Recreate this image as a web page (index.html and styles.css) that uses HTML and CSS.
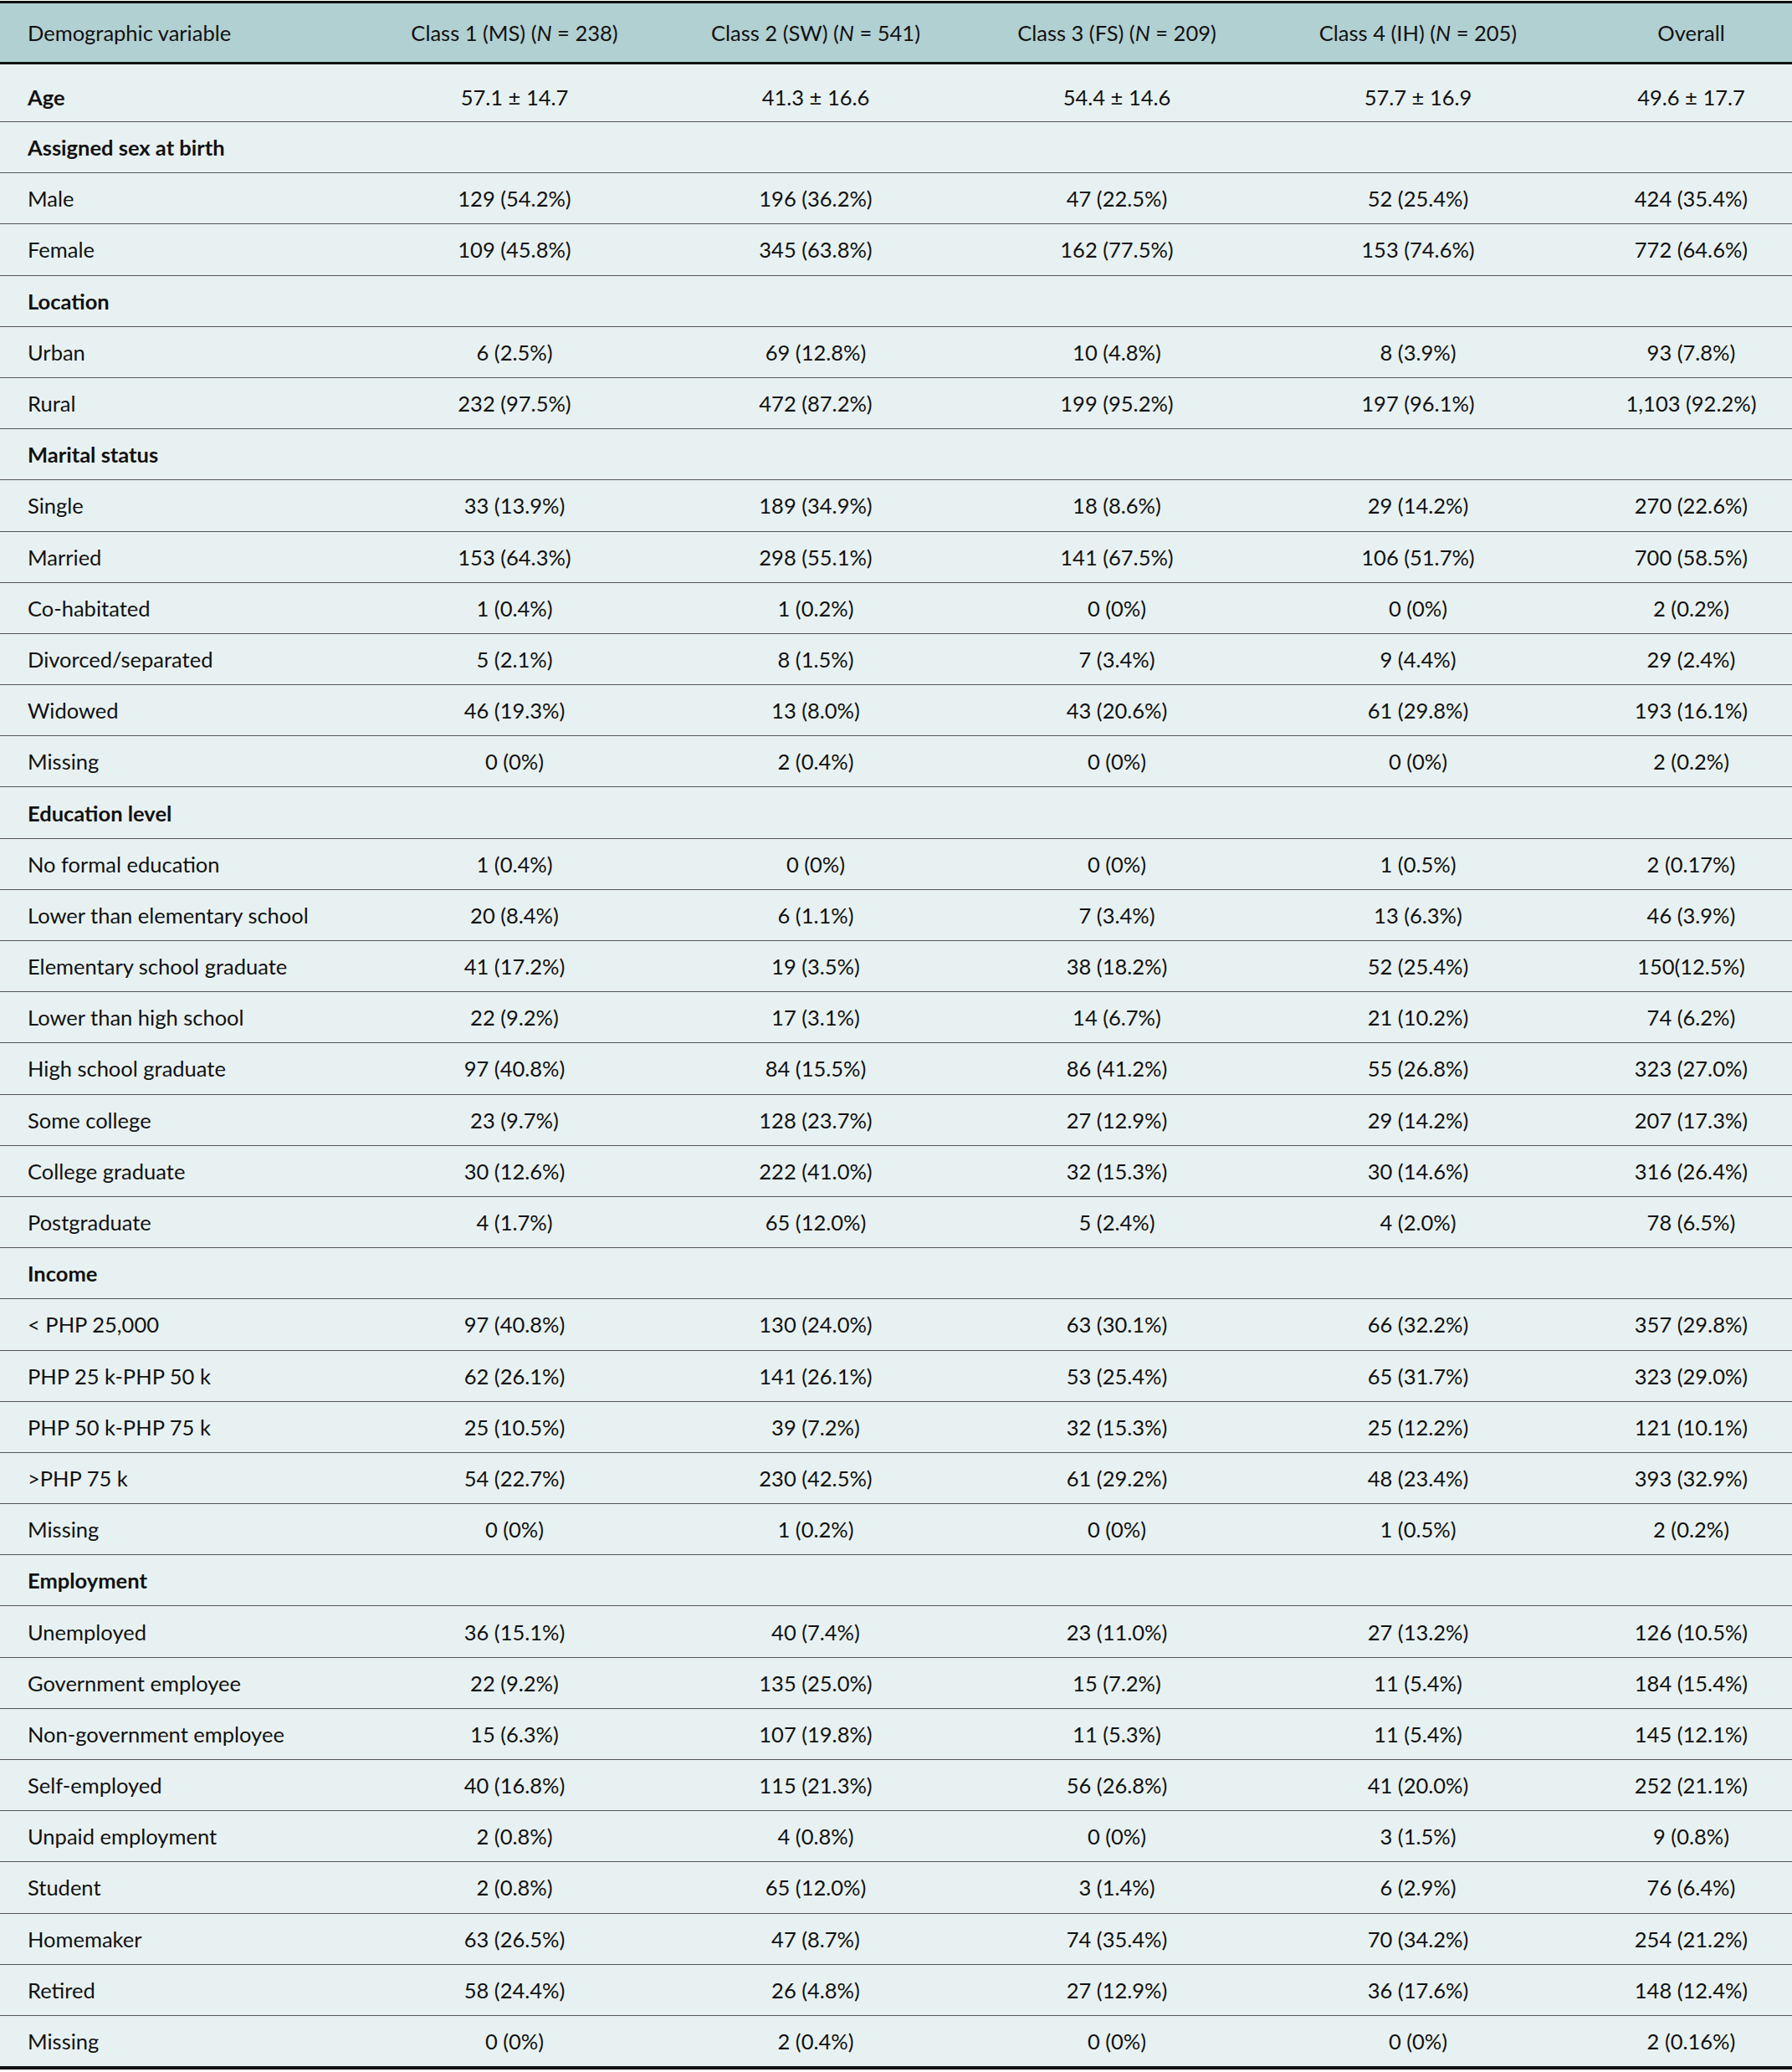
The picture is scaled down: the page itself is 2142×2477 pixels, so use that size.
FILE: index.html
```html
<!DOCTYPE html>
<html lang="en">
<head>
    <meta charset="UTF-8">
    <title>Demographic characteristics by class</title>
    <link rel="stylesheet" href="styles.css">
</head>
<body>
    <table class="demo-table">
        <colgroup>
            <col class="col-label">
            <col class="col-class">
            <col class="col-class">
            <col class="col-class">
            <col class="col-class">
            <col class="col-overall">
        </colgroup>
        <thead>
            <tr>
                <th>Demographic variable</th>
                <th>Class 1 (MS) (<i>N</i> = 238)</th>
                <th>Class 2 (SW) (<i>N</i> = 541)</th>
                <th>Class 3 (FS) (<i>N</i> = 209)</th>
                <th>Class 4 (IH) (<i>N</i> = 205)</th>
                <th class="overall">Overall</th>
            </tr>
        </thead>
        <tbody>
            <tr class="first-row"><td class="group">Age</td><td>57.1 ± 14.7</td><td>41.3 ± 16.6</td><td>54.4 ± 14.6</td><td>57.7 ± 16.9</td><td class="overall">49.6 ± 17.7</td></tr>
            <tr><td class="group">Assigned sex at birth</td><td></td><td></td><td></td><td></td><td class="overall"></td></tr>
            <tr><td>Male</td><td>129 (54.2%)</td><td>196 (36.2%)</td><td>47 (22.5%)</td><td>52 (25.4%)</td><td class="overall">424 (35.4%)</td></tr>
            <tr><td>Female</td><td>109 (45.8%)</td><td>345 (63.8%)</td><td>162 (77.5%)</td><td>153 (74.6%)</td><td class="overall">772 (64.6%)</td></tr>
            <tr><td class="group">Location</td><td></td><td></td><td></td><td></td><td class="overall"></td></tr>
            <tr><td>Urban</td><td>6 (2.5%)</td><td>69 (12.8%)</td><td>10 (4.8%)</td><td>8 (3.9%)</td><td class="overall">93 (7.8%)</td></tr>
            <tr><td>Rural</td><td>232 (97.5%)</td><td>472 (87.2%)</td><td>199 (95.2%)</td><td>197 (96.1%)</td><td class="overall">1,103 (92.2%)</td></tr>
            <tr><td class="group">Marital status</td><td></td><td></td><td></td><td></td><td class="overall"></td></tr>
            <tr><td>Single</td><td>33 (13.9%)</td><td>189 (34.9%)</td><td>18 (8.6%)</td><td>29 (14.2%)</td><td class="overall">270 (22.6%)</td></tr>
            <tr><td>Married</td><td>153 (64.3%)</td><td>298 (55.1%)</td><td>141 (67.5%)</td><td>106 (51.7%)</td><td class="overall">700 (58.5%)</td></tr>
            <tr><td>Co-habitated</td><td>1 (0.4%)</td><td>1 (0.2%)</td><td>0 (0%)</td><td>0 (0%)</td><td class="overall">2 (0.2%)</td></tr>
            <tr><td>Divorced/separated</td><td>5 (2.1%)</td><td>8 (1.5%)</td><td>7 (3.4%)</td><td>9 (4.4%)</td><td class="overall">29 (2.4%)</td></tr>
            <tr><td>Widowed</td><td>46 (19.3%)</td><td>13 (8.0%)</td><td>43 (20.6%)</td><td>61 (29.8%)</td><td class="overall">193 (16.1%)</td></tr>
            <tr><td>Missing</td><td>0 (0%)</td><td>2 (0.4%)</td><td>0 (0%)</td><td>0 (0%)</td><td class="overall">2 (0.2%)</td></tr>
            <tr><td class="group">Education level</td><td></td><td></td><td></td><td></td><td class="overall"></td></tr>
            <tr><td>No formal education</td><td>1 (0.4%)</td><td>0 (0%)</td><td>0 (0%)</td><td>1 (0.5%)</td><td class="overall">2 (0.17%)</td></tr>
            <tr><td>Lower than elementary school</td><td>20 (8.4%)</td><td>6 (1.1%)</td><td>7 (3.4%)</td><td>13 (6.3%)</td><td class="overall">46 (3.9%)</td></tr>
            <tr><td>Elementary school graduate</td><td>41 (17.2%)</td><td>19 (3.5%)</td><td>38 (18.2%)</td><td>52 (25.4%)</td><td class="overall">150(12.5%)</td></tr>
            <tr><td>Lower than high school</td><td>22 (9.2%)</td><td>17 (3.1%)</td><td>14 (6.7%)</td><td>21 (10.2%)</td><td class="overall">74 (6.2%)</td></tr>
            <tr><td>High school graduate</td><td>97 (40.8%)</td><td>84 (15.5%)</td><td>86 (41.2%)</td><td>55 (26.8%)</td><td class="overall">323 (27.0%)</td></tr>
            <tr><td>Some college</td><td>23 (9.7%)</td><td>128 (23.7%)</td><td>27 (12.9%)</td><td>29 (14.2%)</td><td class="overall">207 (17.3%)</td></tr>
            <tr><td>College graduate</td><td>30 (12.6%)</td><td>222 (41.0%)</td><td>32 (15.3%)</td><td>30 (14.6%)</td><td class="overall">316 (26.4%)</td></tr>
            <tr><td>Postgraduate</td><td>4 (1.7%)</td><td>65 (12.0%)</td><td>5 (2.4%)</td><td>4 (2.0%)</td><td class="overall">78 (6.5%)</td></tr>
            <tr><td class="group">Income</td><td></td><td></td><td></td><td></td><td class="overall"></td></tr>
            <tr><td>&lt; PHP 25,000</td><td>97 (40.8%)</td><td>130 (24.0%)</td><td>63 (30.1%)</td><td>66 (32.2%)</td><td class="overall">357 (29.8%)</td></tr>
            <tr><td>PHP 25 k-PHP 50 k</td><td>62 (26.1%)</td><td>141 (26.1%)</td><td>53 (25.4%)</td><td>65 (31.7%)</td><td class="overall">323 (29.0%)</td></tr>
            <tr><td>PHP 50 k-PHP 75 k</td><td>25 (10.5%)</td><td>39 (7.2%)</td><td>32 (15.3%)</td><td>25 (12.2%)</td><td class="overall">121 (10.1%)</td></tr>
            <tr><td>&gt;PHP 75 k</td><td>54 (22.7%)</td><td>230 (42.5%)</td><td>61 (29.2%)</td><td>48 (23.4%)</td><td class="overall">393 (32.9%)</td></tr>
            <tr><td>Missing</td><td>0 (0%)</td><td>1 (0.2%)</td><td>0 (0%)</td><td>1 (0.5%)</td><td class="overall">2 (0.2%)</td></tr>
            <tr><td class="group">Employment</td><td></td><td></td><td></td><td></td><td class="overall"></td></tr>
            <tr><td>Unemployed</td><td>36 (15.1%)</td><td>40 (7.4%)</td><td>23 (11.0%)</td><td>27 (13.2%)</td><td class="overall">126 (10.5%)</td></tr>
            <tr><td>Government employee</td><td>22 (9.2%)</td><td>135 (25.0%)</td><td>15 (7.2%)</td><td>11 (5.4%)</td><td class="overall">184 (15.4%)</td></tr>
            <tr><td>Non-government employee</td><td>15 (6.3%)</td><td>107 (19.8%)</td><td>11 (5.3%)</td><td>11 (5.4%)</td><td class="overall">145 (12.1%)</td></tr>
            <tr><td>Self-employed</td><td>40 (16.8%)</td><td>115 (21.3%)</td><td>56 (26.8%)</td><td>41 (20.0%)</td><td class="overall">252 (21.1%)</td></tr>
            <tr><td>Unpaid employment</td><td>2 (0.8%)</td><td>4 (0.8%)</td><td>0 (0%)</td><td>3 (1.5%)</td><td class="overall">9 (0.8%)</td></tr>
            <tr><td>Student</td><td>2 (0.8%)</td><td>65 (12.0%)</td><td>3 (1.4%)</td><td>6 (2.9%)</td><td class="overall">76 (6.4%)</td></tr>
            <tr><td>Homemaker</td><td>63 (26.5%)</td><td>47 (8.7%)</td><td>74 (35.4%)</td><td>70 (34.2%)</td><td class="overall">254 (21.2%)</td></tr>
            <tr><td>Retired</td><td>58 (24.4%)</td><td>26 (4.8%)</td><td>27 (12.9%)</td><td>36 (17.6%)</td><td class="overall">148 (12.4%)</td></tr>
            <tr><td>Missing</td><td>0 (0%)</td><td>2 (0.4%)</td><td>0 (0%)</td><td>0 (0%)</td><td class="overall">2 (0.16%)</td></tr>
        </tbody>
    </table>
</body>
</html>
```

FILE: styles.css
```css
body {
    margin: 0;
    background-color: white;
    color: #111;
    font-family: 'Lato', 'Liberation Sans', sans-serif;
}
.demo-table {
    width: 2142px;
    margin-top: 1px;
    border-collapse: collapse;
    table-layout: fixed;
    background-color: #e8f1f1;
    border-top: 3px solid #111;
    border-bottom: 4px solid #111;
    font-size: 25.5px;
}
.col-label {
    width: 435px;
}
.col-class {
    width: 360px;
}
.col-overall {
    width: 267px;
}
.demo-table th {
    background-color: #b1d0d2;
    font-weight: normal;
    height: 70px;
    padding: 0;
    text-align: center;
    border-bottom: 3px solid #111;
}
.demo-table td {
    height: 60.2px;
    padding: 0;
    text-align: center;
    border-bottom: 1.3px solid #555;
}
.demo-table th:first-child,
.demo-table td:first-child {
    text-align: left;
    padding-left: 33px;
}
.demo-table .overall {
    padding-left: 26px;
}
.demo-table tr:last-child td {
    border-bottom: none;
}
.demo-table .first-row td {
    height: 59px;
    padding-top: 9px;
}
.group {
    font-weight: bold;
}
```
